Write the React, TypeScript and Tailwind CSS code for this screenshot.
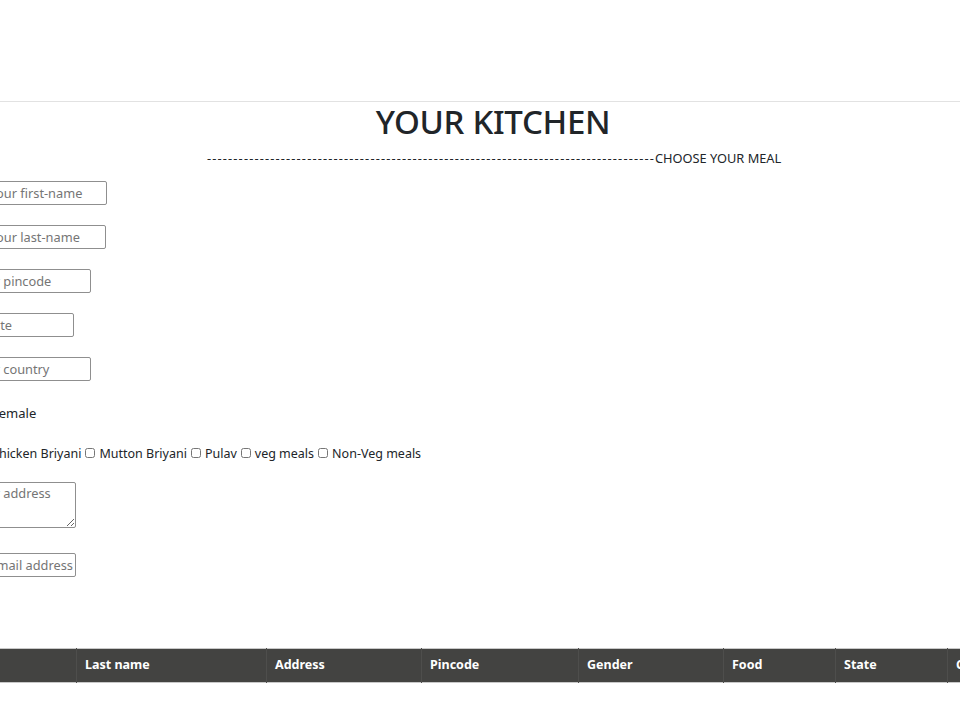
import React from 'react';

const FOODS = ['Mutton Briyani', 'Pulav', 'veg meals', 'Non-Veg meals'];

const COLUMNS = [
  { name: 'First name', w: 'w-[196px]' },
  { name: 'Last name', w: 'w-[190px]' },
  { name: 'Address', w: 'w-[155px]' },
  { name: 'Pincode', w: 'w-[157px]' },
  { name: 'Gender', w: 'w-[145px]' },
  { name: 'Food', w: 'w-[112px]' },
  { name: 'State', w: 'w-[112px]' },
  { name: 'Country', w: 'w-[140px]' },
];

const inputCls =
  'h-[24px] border border-[#8f8f8f] rounded-[2px] px-[2px] text-[12.8px] text-[#212529] placeholder:text-[#757575] bg-white outline-none';

const App: React.FC = () => {
  return (
    <div className="w-[960px] h-[720px] overflow-hidden bg-white text-[#212529] font-['Noto_Sans',sans-serif]">
      <div className="h-[101px]" />
      <div className="border-t border-[#e2e2e2]" />

      {/* Heading */}
      <h1 className="pl-[26px] text-center text-[33px] leading-[40px] font-medium tracking-[-0.3px]">YOUR KITCHEN</h1>
      <div className="mt-[7px] flex pl-[207px] text-[12.8px] leading-[18px] whitespace-nowrap">
        <span className="tracking-[1.15px]">{'-'.repeat(85)}</span>
        <span>CHOOSE YOUR MEAL</span>
      </div>

      {/* Form */}
      <form className="mt-[14px] flex flex-col items-start">
        <input className={`${inputCls} -ml-[49px] w-[156px]`} placeholder="Enter your first-name" />
        <input className={`${inputCls} mt-[20px] -ml-[49px] w-[155px]`} placeholder="Enter your last-name" />
        <input className={`${inputCls} mt-[20px] -ml-[66px] w-[157px]`} placeholder="Enter your pincode" />
        <input className={`${inputCls} mt-[20px] -ml-[87px] w-[161px]`} placeholder="Enter your state" />
        <input className={`${inputCls} mt-[20px] -ml-[66px] w-[157px]`} placeholder="Enter your country" />

        <div className="mt-[23px] -ml-[8px] text-[13px] leading-[18px]">Female</div>

        <div className="mt-[23px] -ml-[9px] flex items-center text-[12.5px] leading-[18px] whitespace-nowrap">
          <span>Chicken Briyani</span>
          {FOODS.map((f) => (
            <label key={f} className="flex items-center">
              <input type="checkbox" className="mx-[4px] w-[10px] h-[10px] -mt-[2px]" />
              <span>{f}</span>
            </label>
          ))}
        </div>

        <textarea
          className="mt-[19px] -ml-[66px] w-[142px] h-[46px] border border-[#8f8f8f] rounded-[2px] px-[2px] py-[1px] text-[12.8px] placeholder:text-[#757575] outline-none"
          placeholder="Enter your address"
        />

        <input className={`${inputCls} mt-[25px] -ml-[80px] w-[156px]`} placeholder="Enter your email address" />
      </form>

      {/* Table */}
      <table className="mt-[71px] -ml-[120px] w-[1207px] table-fixed border-collapse text-[12.5px] text-white">
        <thead>
          <tr className="bg-[#434341] border-t border-b border-[#c8c8c8]">
            {COLUMNS.map((c) => (
              <th
                key={c.name}
                className={`${c.w} h-[34px] px-[8px] text-left font-bold whitespace-nowrap border-x border-[#4e4e4c]`}
              >
                {c.name}
              </th>
            ))}
          </tr>
        </thead>
      </table>
    </div>
  );
};

export default App;
